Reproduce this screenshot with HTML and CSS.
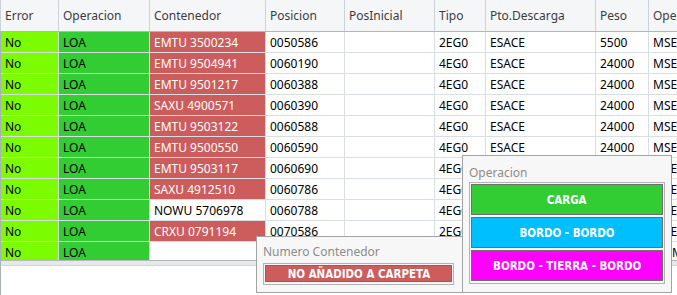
FILE: index.html
```html
<!DOCTYPE html>
<html lang="es">
<head>
    <meta charset="UTF-8">
    <title>Contenedores</title>
    <link rel="stylesheet" href="styles.css">
</head>
<body>
    <div class="screen">
        <!-- Grid header -->
        <div class="grid-head">
            <div>Error</div>
            <div>Operacion</div>
            <div>Contenedor</div>
            <div>Posicion</div>
            <div>PosInicial</div>
            <div>Tipo</div>
            <div>Pto.Descarga</div>
            <div>Peso</div>
            <div>Operador</div>
        </div>

        <!-- Grid rows -->
        <div class="grid-body">
            <div class="grid-rows">
                <div class="c-err">No</div><div class="c-op">LOA</div><div class="c-cont">EMTU 3500234</div><div>0050586</div><div></div><div>2EG0</div><div>ESACE</div><div>5500</div><div>MSE</div>
                <div class="c-err">No</div><div class="c-op">LOA</div><div class="c-cont">EMTU 9504941</div><div>0060190</div><div></div><div>4EG0</div><div>ESACE</div><div>24000</div><div>MSE</div>
                <div class="c-err">No</div><div class="c-op">LOA</div><div class="c-cont">EMTU 9501217</div><div>0060388</div><div></div><div>4EG0</div><div>ESACE</div><div>24000</div><div>MSE</div>
                <div class="c-err">No</div><div class="c-op">LOA</div><div class="c-cont">SAXU 4900571</div><div>0060390</div><div></div><div>4EG0</div><div>ESACE</div><div>24000</div><div>MSE</div>
                <div class="c-err">No</div><div class="c-op">LOA</div><div class="c-cont">EMTU 9503122</div><div>0060588</div><div></div><div>4EG0</div><div>ESACE</div><div>24000</div><div>MSE</div>
                <div class="c-err">No</div><div class="c-op">LOA</div><div class="c-cont">EMTU 9500550</div><div>0060590</div><div></div><div>4EG0</div><div>ESACE</div><div>24000</div><div>MSE</div>
                <div class="c-err">No</div><div class="c-op">LOA</div><div class="c-cont">EMTU 9503117</div><div>0060690</div><div></div><div>4EG0</div><div></div><div></div><div>MSE</div>
                <div class="c-err">No</div><div class="c-op">LOA</div><div class="c-cont">SAXU 4912510</div><div>0060786</div><div></div><div>4EG0</div><div></div><div></div><div>MSE</div>
                <div class="c-err">No</div><div class="c-op">LOA</div><div>NOWU 5706978</div><div>0060788</div><div></div><div>4EG0</div><div></div><div></div><div>MSE</div>
                <div class="c-err">No</div><div class="c-op">LOA</div><div class="c-cont">CRXU 0791194</div><div>0070586</div><div></div><div>2EG0</div><div></div><div></div><div>MSE</div>
                <div class="c-err">No</div><div class="c-op">LOA</div><div></div><div></div><div></div><div></div><div></div><div></div><div class="c-last">MSE</div>
            </div>
        </div>
        <div class="grid-foot"></div>
        <div class="grid-empty"></div>

        <!-- Numero Contenedor popup -->
        <div class="popup popup-num">
            <div class="popup-label">Numero Contenedor</div>
            <div class="btn-group">
                <div class="flat-btn btn-red"><span>NO AÑADIDO A CARPETA</span></div>
            </div>
        </div>

        <!-- Operacion popup -->
        <div class="popup popup-op">
            <div class="popup-label">Operacion</div>
            <div class="btn-group btn-stack">
                <div class="flat-btn btn-big btn-green"><span>CARGA</span></div>
                <div class="flat-btn btn-big btn-blue"><span>BORDO - BORDO</span></div>
                <div class="flat-btn btn-big btn-pink"><span>BORDO - TIERRA - BORDO</span></div>
            </div>
        </div>
    </div>
</body>
</html>
```

FILE: styles.css
```css
/* Page */
body {
    margin: 0;
    background: #ffffff;
    font-family: "Noto Sans", "Open Sans", sans-serif;
    font-size: 12px;
    overflow: hidden;
}

.screen {
    position: relative;
    width: 677px;
    height: 295px;
    overflow: hidden;
}

/* Grid header and rows share the same columns */
.grid-head,
.grid-rows {
    display: grid;
    grid-template-columns: 57px 90px 115px 78px 89px 50px 109px 52px 80px;
    column-gap: 1px;
    width: 729px;
}

.grid-head {
    height: 31px;
    padding-left: 1px;
    background: #cdd2d8;
    border-bottom: 1px solid #aeb5bd;
}

.grid-head div {
    background: #f5f6f8;
    color: #3c3c3c;
    line-height: 31px;
    padding-left: 4px;
    white-space: nowrap;
    overflow: hidden;
}

.grid-body {
    height: 228px;
    overflow: hidden;
    border-left: 1px solid #a9b0b8;
}

.grid-rows {
    grid-auto-rows: 20px;
    row-gap: 1px;
    background: #d9dee3;
    padding-bottom: 1px;
}

.grid-rows div {
    background: #ffffff;
    color: #000000;
    line-height: 21px;
    padding-left: 4px;
    white-space: nowrap;
    overflow: hidden;
}

.grid-rows .c-err {
    background: #7cfc00;
}

.grid-rows .c-op {
    background: #32cd32;
}

.grid-rows .c-cont {
    background: #cd5c5c;
    color: #ffffff;
}

.grid-rows .c-last {
    padding-left: 23px;
}

.grid-foot {
    height: 4px;
    background: #e7e8ea;
    border-top: 1px solid #b4b8bd;
    border-left: 1px solid #a9b0b8;
}

.grid-empty {
    height: 30px;
    border-left: 1px solid #a9b0b8;
    border-top: 1px solid #d6d9dc;
}

/* Floating popups */
.popup {
    position: absolute;
    box-sizing: border-box;
    background: #f7f7f7;
    border: 1px solid #a3a3a3;
    padding: 0 6px;
}

.popup-num {
    left: 256px;
    top: 236px;
    width: 207px;
    height: 57px;
    z-index: 1;
}

.popup-op {
    left: 462px;
    top: 155px;
    width: 210px;
    height: 138px;
    z-index: 2;
}

.popup-label {
    box-sizing: border-box;
    color: #8c8c8c;
    height: 26px;
    padding-top: 7px;
    line-height: 16px;
    white-space: nowrap;
}

.popup-op .popup-label {
    padding-top: 9px;
}

.btn-group {
    border: 1px solid #b3b3b3;
    padding: 1px;
}

.popup-num .btn-group {
    margin-right: 2px;
    padding-bottom: 2px;
}

.btn-stack {
    display: flex;
    flex-direction: column;
    gap: 2px;
    padding: 1px 1px 2px 1px;
}

/* Flat coloured buttons, narrow bold caps */
.flat-btn {
    border: 1px solid #6e6e6e;
    color: #ffffff;
    font-family: "DejaVu Sans", sans-serif;
    font-stretch: condensed;
    font-weight: bold;
    font-size: 13px;
    text-align: center;
    height: 15px;
    line-height: 16px;
    white-space: nowrap;
}

.flat-btn span {
    display: inline-block;
    transform: scaleX(0.88);
}

.btn-big {
    height: 29px;
    line-height: 29px;
}

.btn-red {
    background: #cd5c5c;
}

.btn-green {
    background: #32cd32;
}

.btn-blue {
    background: #00bfff;
}

.btn-pink {
    background: #ff00ff;
}
```
